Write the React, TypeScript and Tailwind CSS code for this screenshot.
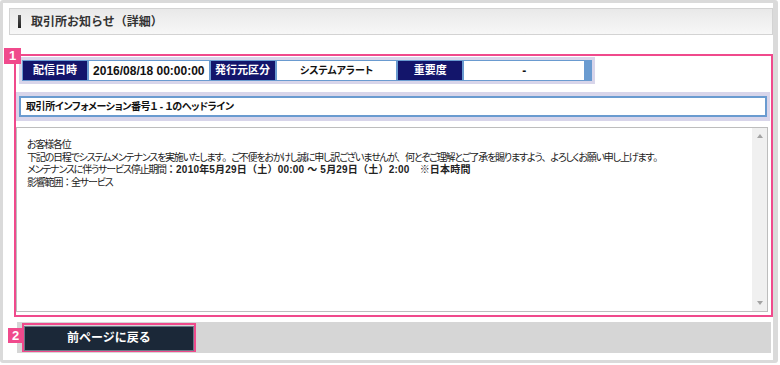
const font = { fontFamily: '"Liberation Sans", "Noto Sans CJK JP", sans-serif' }
const palt = { fontFeatureSettings: '"palt"' }
const full = { fontFeatureSettings: 'normal' }

function Label({ children }: { children: React.ReactNode }) {
  return (
    <div className="w-[64px] h-[19px] flex items-center justify-center bg-[#13156b] text-white text-[11px] font-bold">
      {children}
    </div>
  )
}

function Value({ children }: { children: React.ReactNode }) {
  return (
    <div className="w-[120px] h-[19px] flex items-center justify-center bg-white text-[#111]">
      {children}
    </div>
  )
}

// 句読点は全角幅のまま
const P = ({ c }: { c: string }) => <span style={full}>{c}</span>

export default function App() {
  return (
    <div className="w-[780px] h-[365px] bg-white" style={font}>
      <div className="w-[778px] h-[363px] border-[3px] border-r-[5px] border-[#dadada] rounded-[3px] bg-white pt-[5px]">
        {/* タイトル */}
        <div className="ml-[6px] h-[27px] border border-[#d3d3d3] bg-gradient-to-b from-[#e9e9e9] to-[#f7f7f7] flex items-center">
          <div className="ml-[8px] w-[3px] h-[13px] bg-gradient-to-b from-[#555] to-[#222]" />
          <span className="ml-[10px] text-[12px] font-bold text-[#333]">取引所お知らせ（詳細）</span>
        </div>

        {/* 1 */}
        <div className="relative mt-[19px] ml-[11px] h-[263px] border-2 border-[#f04a8c] pt-[1px]">
          <div className="absolute -left-[12px] -top-[8px] w-[17px] h-[16px] bg-[#f04a8c] text-white text-[13px] font-bold leading-[16px] text-center">
            1
          </div>

          <div className="ml-[3px] w-[576px] bg-[#d8d5ea] p-[3px]">
            <div className="flex gap-[2px] bg-[#6a9bd0] p-[1px] pr-[8px]">
              <Label>配信日時</Label>
              <Value><span className="text-[12px] font-bold">2016/08/18 00:00:00</span></Value>
              <Label>発行元区分</Label>
              <Value><span className="text-[10px] font-bold" style={palt}>システムアラート</span></Value>
              <Label>重要度</Label>
              <Value><span className="text-[12px] font-bold">-</span></Value>
            </div>
          </div>

          <div className="mt-[8px] mr-[1px] bg-[#d8d5ea] px-[3px] py-[4px]">
            <div className="h-[21px] border-2 border-[#6a9bd0] bg-white flex items-center pl-[5px] text-[10px] font-bold tracking-[-0.4px] text-[#111]" style={palt}>
              取引所インフォメーション番号１ - １のヘッドライン
            </div>
          </div>

          <div
            className="relative mt-[6px] mr-[3px] h-[185px] border border-[#bdbdbd] bg-white pl-[10px] pt-[11px] text-[10px] leading-[12.5px] tracking-[-1.2px] text-[#222]"
            style={palt}
          >
            <p>お客様各位</p>
            <p>
              下記の日程でシステムメンテナンスを実施いたします<P c="。" />ご不便をおかけし誠に申し訳ございませんが<P c="、" />何とぞご理解とご了承を賜りますよう<P c="、" />よろしくお願い申し上げます<P c="。" />
            </p>
            <p>
              メンテナンスに伴うサービス停止期間
              <span className="font-bold tracking-[0.2px]" style={full}>：2010年5月29日（土）00:00 ～ 5月29日（土）2:00　※日本時間</span>
            </p>
            <p>影響範囲<P c="：" />全サービス</p>

            <div className="absolute right-0 top-0 bottom-0 w-[15px] bg-[#f0f0f0] flex flex-col items-center justify-between py-[6px]">
              <div className="w-0 h-0 border-x-[3px] border-x-transparent border-b-[4px] border-b-[#a3a3a3]" />
              <div className="w-0 h-0 border-x-[3px] border-x-transparent border-t-[4px] border-t-[#a3a3a3]" />
            </div>
          </div>
        </div>

        {/* 2 */}
        <div className="relative mt-[5px] ml-[14px] mr-[2px] h-[31px] bg-[#d6d6d6] pl-[5px] pt-[1px]">
          <div className="absolute -left-[9px] top-[6px] w-[15px] h-[15px] bg-[#f04a8c] text-white text-[13px] font-bold leading-[15px] text-center">
            2
          </div>
          <div className="w-[174px] h-[29px] border-2 border-[#f04a8c]">
            <button className="w-full h-full border border-[#6b7887] bg-[#1b2838] text-white text-[12px] font-bold">
              前ページに戻る
            </button>
          </div>
        </div>
      </div>
    </div>
  )
}
